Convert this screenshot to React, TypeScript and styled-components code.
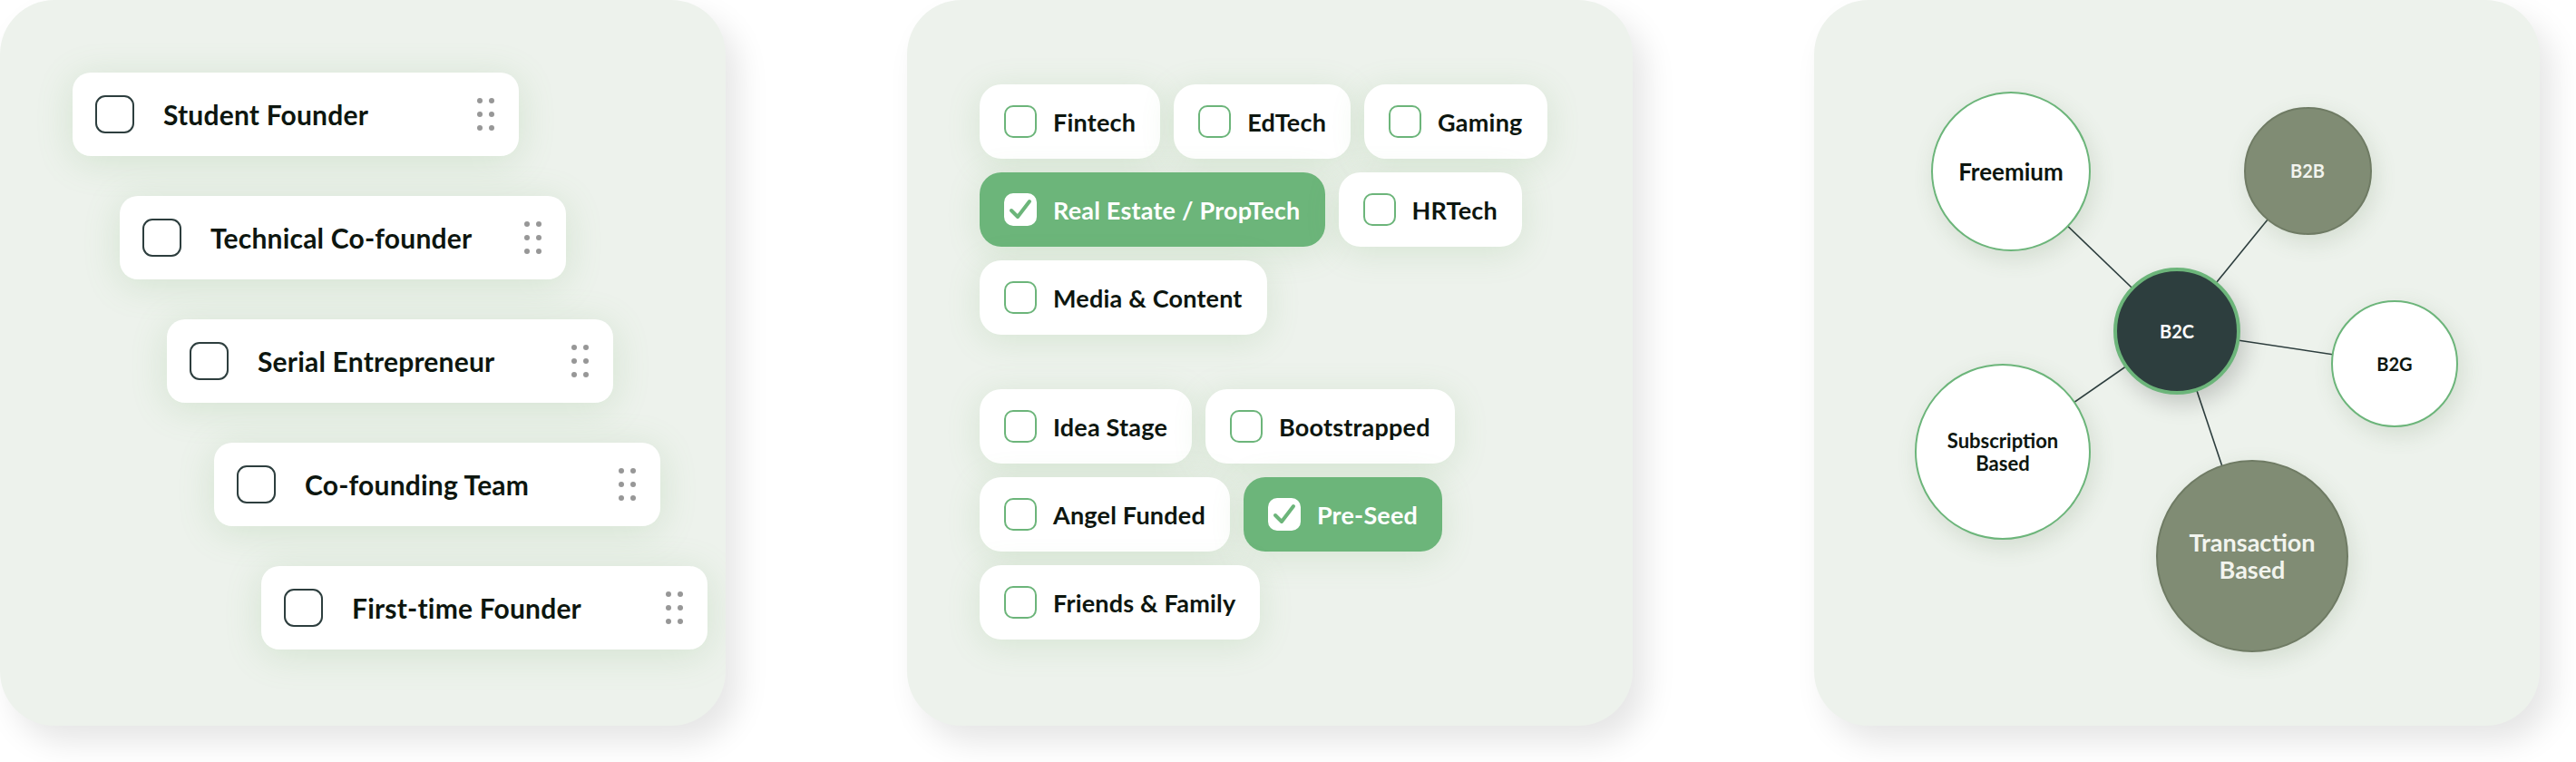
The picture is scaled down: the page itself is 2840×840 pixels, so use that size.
import React from "react";
import styled, { createGlobalStyle } from "styled-components";

const GlobalStyle = createGlobalStyle`
  body {
    margin: 0;
    background: #fff;
    font-family: "Lato", "Liberation Sans", sans-serif;
  }
`;

const GREEN = "#6cb57a";
const DARK = "#2d3e3e";

const founders = [
  "Student Founder",
  "Technical Co-founder",
  "Serial Entrepreneur",
  "Co-founding Team",
  "First-time Founder",
];

const industryRows = [
  [{ label: "Fintech" }, { label: "EdTech" }, { label: "Gaming" }],
  [{ label: "Real Estate / PropTech", checked: true }, { label: "HRTech" }],
  [{ label: "Media & Content" }],
];

const stageRows = [
  [{ label: "Idea Stage" }, { label: "Bootstrapped" }],
  [{ label: "Angel Funded" }, { label: "Pre-Seed", checked: true }],
  [{ label: "Friends & Family" }],
];

type Tone = "light" | "muted";

const nodes: { label: string[]; x: number; y: number; size: number; tone: Tone; fontSize: number }[] = [
  { label: ["Freemium"], x: 217, y: 189, size: 176, tone: "light", fontSize: 26 },
  { label: ["B2B"], x: 544, y: 188, size: 141, tone: "muted", fontSize: 20 },
  { label: ["B2G"], x: 640, y: 401, size: 140, tone: "light", fontSize: 20 },
  { label: ["Subscription", "Based"], x: 208, y: 498, size: 194, tone: "light", fontSize: 22 },
  { label: ["Transaction", "Based"], x: 483, y: 613, size: 212, tone: "muted", fontSize: 27 },
];

const hub = { x: 400, y: 365 };

export default function App() {
  return (
    <>
      <GlobalStyle />
      <Page>
        <Panel>
          <FounderList>
            {founders.map((name, i) => (
              <FounderRow key={name} $indent={i * 52}>
                <OutlineBox />
                <FounderName>{name}</FounderName>
                <Grip>
                  {Array.from({ length: 6 }).map((_, d) => (
                    <Dot key={d} />
                  ))}
                </Grip>
              </FounderRow>
            ))}
          </FounderList>
        </Panel>

        <Panel>
          <ChipArea>
            {[industryRows, stageRows].map((group, g) => (
              <ChipGroup key={g}>
                {group.map((row, r) => (
                  <ChipRow key={r}>
                    {row.map((chip) => (
                      <Chip key={chip.label} $checked={!!chip.checked}>
                        <ChipBox $checked={!!chip.checked}>
                          {chip.checked && (
                            <svg width="28" height="26" viewBox="0 0 28 26">
                              <polyline
                                points="4,14 11,21 24,4"
                                fill="none"
                                stroke={GREEN}
                                strokeWidth="4"
                                strokeLinecap="round"
                                strokeLinejoin="round"
                              />
                            </svg>
                          )}
                        </ChipBox>
                        {chip.label}
                      </Chip>
                    ))}
                  </ChipRow>
                ))}
              </ChipGroup>
            ))}
          </ChipArea>
        </Panel>

        <Panel>
          <Diagram>
            <Links width="800" height="800" viewBox="0 0 800 800">
              {nodes.map((n) => (
                <line key={n.label.join()} x1={hub.x} y1={hub.y} x2={n.x} y2={n.y} stroke={DARK} strokeWidth="1.6" />
              ))}
            </Links>
            {nodes.map((n) => (
              <Node
                key={n.label.join()}
                $tone={n.tone}
                $size={n.size}
                $fontSize={n.fontSize}
                style={{ left: n.x - n.size / 2, top: n.y - n.size / 2 }}
              >
                {n.label.map((l) => (
                  <span key={l}>{l}</span>
                ))}
              </Node>
            ))}
            <HubNode style={{ left: hub.x - 70, top: hub.y - 70 }}>B2C</HubNode>
          </Diagram>
        </Panel>
      </Page>
    </>
  );
}

const Page = styled.div`
  display: flex;
  gap: 200px;
  width: 2840px;
  height: 840px;
  align-items: flex-start;
`;

const Panel = styled.div`
  position: relative;
  width: 800px;
  height: 800px;
  flex: 0 0 auto;
  box-sizing: border-box;
  border-radius: 60px;
  background: #edf2ec;
  box-shadow: 14px 18px 34px rgba(0, 0, 0, 0.1);
  overflow: hidden;
`;

const FounderList = styled.div`
  display: flex;
  flex-direction: column;
  gap: 44px;
  padding: 80px 0 0 80px;
`;

const FounderRow = styled.div<{ $indent: number }>`
  display: flex;
  align-items: center;
  width: 492px;
  height: 92px;
  box-sizing: border-box;
  margin-left: ${(p) => p.$indent}px;
  padding: 0 27px 0 25px;
  background: #fff;
  border-radius: 20px;
  box-shadow: 0 6px 40px rgba(110, 170, 100, 0.2);
`;

const OutlineBox = styled.div`
  width: 43px;
  height: 42px;
  box-sizing: border-box;
  border: 2.5px solid ${DARK};
  border-radius: 11px;
  flex: 0 0 auto;
`;

const FounderName = styled.div`
  flex: 1 1 auto;
  margin-left: 32px;
  font-size: 30px;
  font-weight: 700;
  color: #0d160f;
  letter-spacing: 0.2px;
`;

const Grip = styled.div`
  display: grid;
  grid-template-columns: repeat(2, 6px);
  grid-auto-rows: 6px;
  column-gap: 7px;
  row-gap: 9px;
`;

const Dot = styled.span`
  width: 6px;
  height: 6px;
  border-radius: 50%;
  background: #979797;
`;

const ChipArea = styled.div`
  display: flex;
  flex-direction: column;
  gap: 60px;
  padding: 93px 0 0 80px;
`;

const ChipGroup = styled.div`
  display: flex;
  flex-direction: column;
  gap: 15px;
`;

const ChipRow = styled.div`
  display: flex;
  gap: 15px;
`;

const Chip = styled.div<{ $checked: boolean }>`
  display: flex;
  align-items: center;
  gap: 18px;
  height: 82px;
  box-sizing: border-box;
  padding: 0 27px 0 27px;
  border-radius: 24px;
  background: ${(p) => (p.$checked ? GREEN : "#fff")};
  color: ${(p) => (p.$checked ? "#fff" : "#0d160f")};
  font-size: 27px;
  font-weight: 700;
  letter-spacing: 0.2px;
  box-shadow: 0 6px 36px rgba(110, 170, 100, 0.18);
`;

const ChipBox = styled.div<{ $checked: boolean }>`
  display: flex;
  align-items: center;
  justify-content: center;
  width: 36px;
  height: 36px;
  box-sizing: border-box;
  border-radius: 10px;
  border: ${(p) => (p.$checked ? "none" : `2.5px solid ${GREEN}`)};
  background: ${(p) => (p.$checked ? "#fff" : "transparent")};
  flex: 0 0 auto;
`;

const Diagram = styled.div`
  position: relative;
  width: 800px;
  height: 800px;
`;

const Links = styled.svg`
  position: absolute;
  left: 0;
  top: 0;
`;

const Node = styled.div<{ $tone: Tone; $size: number; $fontSize: number }>`
  position: absolute;
  display: flex;
  flex-direction: column;
  align-items: center;
  justify-content: center;
  width: ${(p) => p.$size}px;
  height: ${(p) => p.$size}px;
  box-sizing: border-box;
  border-radius: 50%;
  background: ${(p) => (p.$tone === "light" ? "#fff" : "#808c74")};
  border: 2px solid ${(p) => (p.$tone === "light" ? GREEN : "#6f7b64")};
  color: ${(p) => (p.$tone === "light" ? "#0d160f" : "#f2f4ee")};
  font-size: ${(p) => p.$fontSize}px;
  line-height: ${(p) => Math.round(p.$fontSize * 1.12)}px;
  font-weight: 700;
  text-align: center;
  box-shadow: 4px 8px 24px rgba(80, 110, 70, 0.16);
`;

const HubNode = styled.div`
  position: absolute;
  display: flex;
  align-items: center;
  justify-content: center;
  width: 140px;
  height: 140px;
  box-sizing: border-box;
  border-radius: 50%;
  background: ${DARK};
  border: 4px solid ${GREEN};
  color: #fff;
  font-size: 20px;
  font-weight: 700;
  box-shadow: 6px 10px 24px rgba(0, 0, 0, 0.18);
`;
